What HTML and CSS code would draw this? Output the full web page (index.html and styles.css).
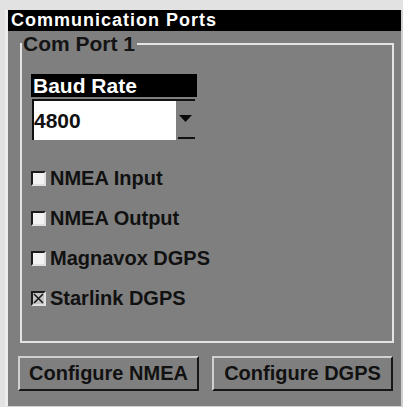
FILE: index.html
```html
<!DOCTYPE html>
<html lang="en">
<head>
<meta charset="utf-8">
<title>Communication Ports</title>
<link rel="stylesheet" href="styles.css">
</head>
<body>
<div class="window">
  <div class="titlebar">Communication Ports</div>
  <fieldset class="group">
    <legend>Com Port 1</legend>
    <div class="field-label">Baud Rate</div>
    <div class="combo">
      <div class="combo-value">4800</div>
      <div class="combo-btn">
        <svg class="combo-arrow" width="13" height="7" viewBox="0 0 13 7"><polygon points="0,0 13,0 6.5,7" fill="#0a0a0a"/></svg>
        <span class="combo-bar"></span>
      </div>
    </div>
    <ul class="checks">
      <li class="check-row"><span class="box"></span><span>NMEA Input</span></li>
      <li class="check-row"><span class="box"></span><span>NMEA Output</span></li>
      <li class="check-row"><span class="box"></span><span>Magnavox DGPS</span></li>
      <li class="check-row"><span class="box checked"><svg width="11" height="11" viewBox="0 0 11 11"><path d="M1 1 L10 10 M10 1 L1 10" stroke="#1a1a1a" stroke-width="1.6" fill="none"/></svg></span><span>Starlink DGPS</span></li>
    </ul>
  </fieldset>
  <div class="buttons">
    <button class="btn">Configure NMEA</button>
    <button class="btn">Configure DGPS</button>
  </div>
</div>
</body>
</html>
```
FILE: styles.css
```css
html, body {
  margin: 0;
  padding: 0;
  background: #e2e2e2;
}
body {
  width: 403px;
  height: 407px;
  overflow: hidden;
  font-family: "Liberation Sans", Arial, sans-serif;
  font-weight: bold;
}
.window {
  margin: 10px 0 0 5px;
  width: 398px;
  height: 397px;
  box-sizing: border-box;
  background: #7f7f7f;
  border-left: 3px solid #ededed;
  border-right: 2px solid #cfcfcf;
  border-bottom: 1px solid #d2d2d2;
  display: flex;
  flex-direction: column;
}
.titlebar {
  height: 21px;
  background: #000;
  color: #fff;
  font-size: 18px;
  letter-spacing: 1px;
  line-height: 21px;
  padding-left: 3px;
  white-space: nowrap;
}
.group {
  margin: 1px 7px 0 12px;
  border: 2px solid #e4e4e4;
  padding: 18px 0 0 9px;
  flex: 1;
  min-width: 0;
  min-height: 0;
}
.group legend {
  margin-left: -9px;
  padding: 0 2px 0 1px;
  font-size: 21px;
  line-height: 24px;
  color: #141414;
}
.field-label {
  width: 166px;
  height: 23px;
  box-sizing: border-box;
  background: #000;
  color: #fff;
  font-size: 21px;
  line-height: 23px;
  padding-left: 2px;
}
.combo {
  margin: 2px 0 0 1px;
  width: 163px;
  height: 41px;
  box-sizing: border-box;
  border-top: 2px solid #111;
  display: flex;
}
.combo-value {
  flex: 1;
  background: #fff;
  border-left: 2px solid #111;
  font-size: 21px;
  line-height: 39px;
  color: #111;
}
.combo-btn {
  width: 19px;
  display: flex;
  flex-direction: column;
  align-items: flex-start;
  padding-top: 14px;
  box-sizing: border-box;
}
.combo-arrow {
  display: block;
  margin-left: 3px;
}
.combo-bar {
  display: block;
  margin: 15px 0 0 2px;
  width: 17px;
  height: 2px;
  background: #111;
}
.checks {
  list-style: none;
  margin: 18px 0 0 0;
  padding: 0;
}
.check-row {
  height: 40px;
  display: flex;
  align-items: center;
  gap: 4px;
  font-size: 20px;
  color: #111;
  white-space: nowrap;
}
.box {
  width: 15px;
  height: 15px;
  box-sizing: border-box;
  border: 2px solid;
  border-color: #1a1a1a #e0e0e0 #e0e0e0 #1a1a1a;
  background: #f2f2f2;
  display: flex;
  align-items: center;
  justify-content: center;
  flex: none;
}
.box.checked {
  background: #c4c4c4;
}
.box svg {
  display: block;
}
.buttons {
  display: flex;
  gap: 13px;
  margin: 13px 0 15px 10px;
}
.btn {
  width: 181px;
  height: 35px;
  box-sizing: border-box;
  padding: 0;
  margin: 0;
  background: #7f7f7f;
  border: 2px solid;
  border-color: #d0d0d0 #161616 #161616 #d0d0d0;
  font-family: "Liberation Sans", Arial, sans-serif;
  font-weight: bold;
  font-size: 20px;
  color: #111;
  white-space: nowrap;
}
```
